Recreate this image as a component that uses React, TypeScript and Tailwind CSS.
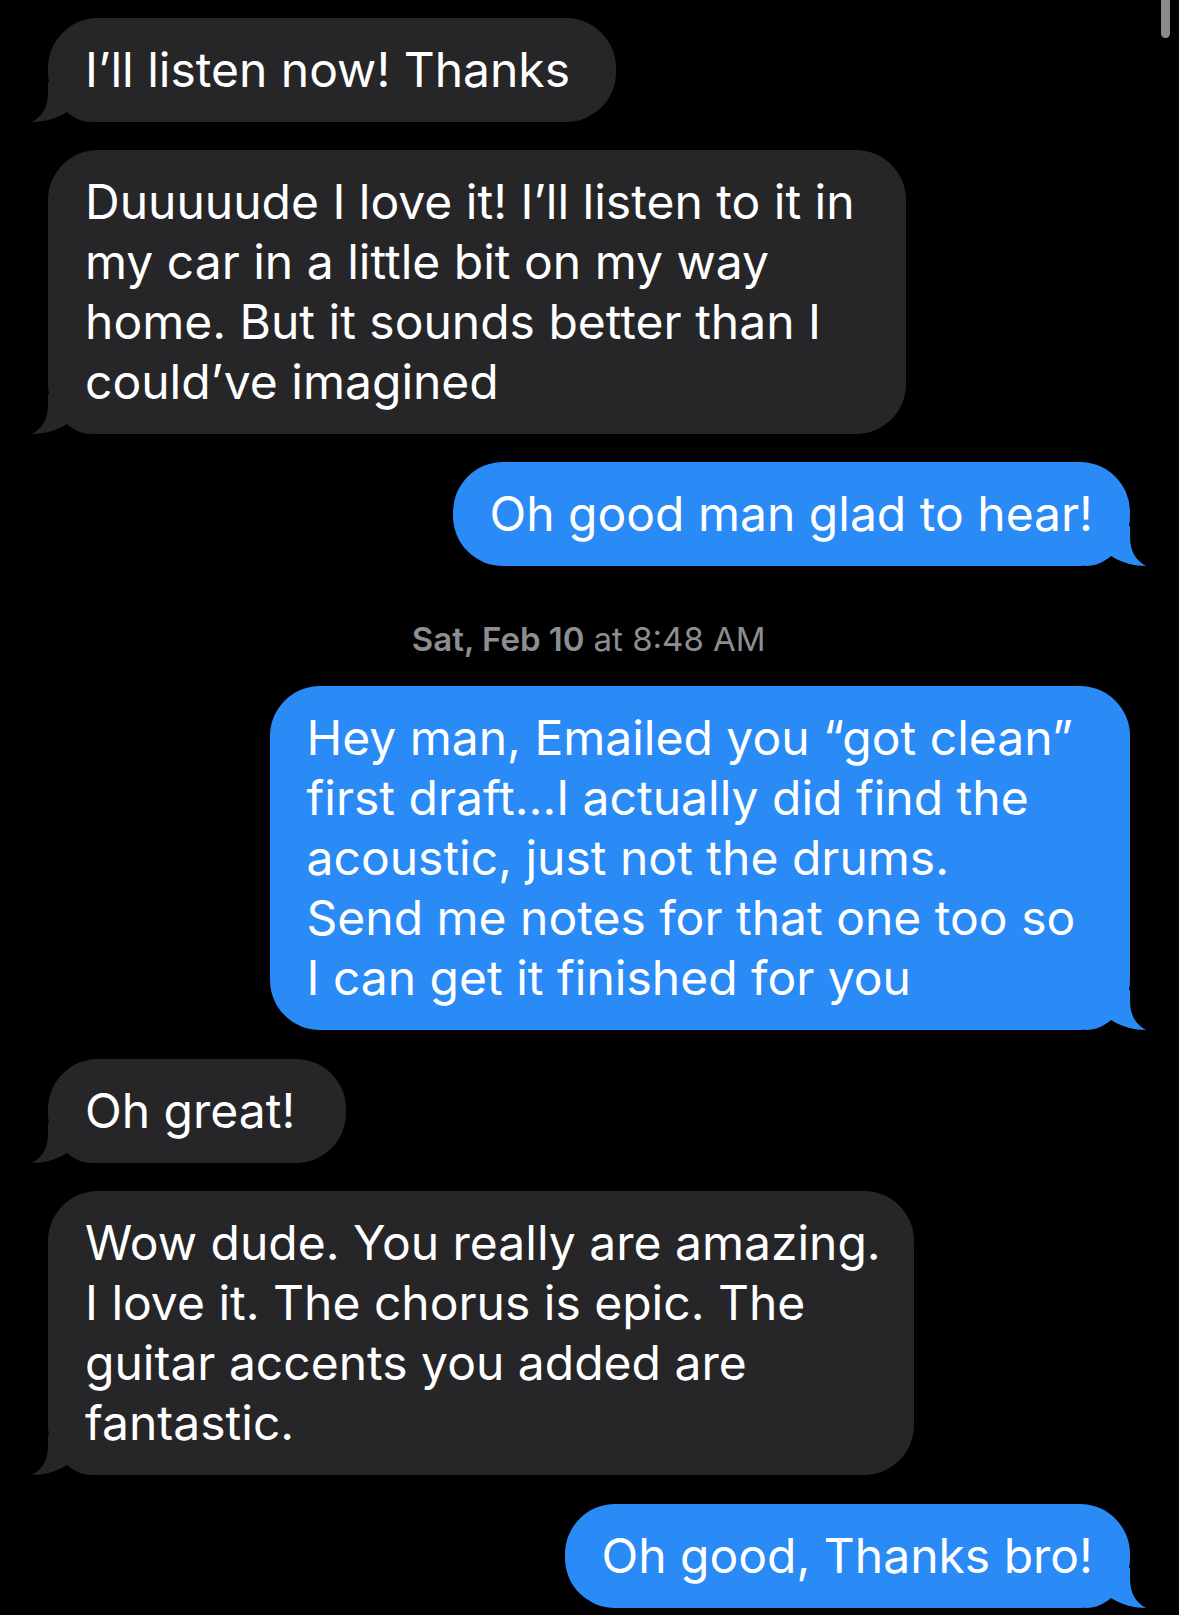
import React from 'react';

type Side = 'in' | 'out';

interface Msg {
  side: Side;
  lines: string[];
  width: number;
  mt: string;
}

const GRAY = '#262628';
const BLUE = '#2a8bf6';

function Tail({ side }: { side: Side }) {
  const fill = side === 'in' ? GRAY : BLUE;
  return (
    <svg
      width="60"
      height="40"
      viewBox="0 0 60 40"
      className={side === 'in' ? 'absolute bottom-0 left-[-16px]' : 'absolute bottom-0 right-[-16px] -scale-x-100'}
    >
      <path d="M16 0 L16 10 C16 27 9 35 0 40 C11 40 24 37 35 30 C42 36 50 40 60 40 L60 0 Z" fill={fill} />
    </svg>
  );
}

function Bubble({ msg }: { msg: Msg }) {
  const isIn = msg.side === 'in';
  return (
    <div className={`flex ${isIn ? 'justify-start' : 'justify-end'} ${msg.mt}`}>
      <div
        className={`relative rounded-[50px] py-[22px] pl-[37px] ${isIn ? 'bg-[#262628]' : 'bg-[#2a8bf6]'}`}
        style={{ width: msg.width }}
      >
        <Tail side={msg.side} />
        <div className="relative text-[48px] leading-[60px] text-white whitespace-nowrap">
          {msg.lines.map((l, i) => (
            <div key={i}>{l}</div>
          ))}
        </div>
      </div>
    </div>
  );
}

const before: Msg[] = [
  { side: 'in', lines: ['I’ll listen now! Thanks'], width: 568, mt: 'mt-0' },
  {
    side: 'in',
    lines: [
      'Duuuuude I love it! I’ll listen to it in',
      'my car in a little bit on my way',
      'home. But it sounds better than I',
      'could’ve imagined',
    ],
    width: 858,
    mt: 'mt-[28.5px]',
  },
  { side: 'out', lines: ['Oh good man glad to hear!'], width: 677, mt: 'mt-[28px]' },
];

const after: Msg[] = [
  {
    side: 'out',
    lines: [
      'Hey man, Emailed you “got clean”',
      'first draft…I actually did find the',
      'acoustic, just not the drums.',
      'Send me notes for that one too so',
      'I can get it finished for you',
    ],
    width: 860,
    mt: 'mt-[26px]',
  },
  { side: 'in', lines: ['Oh great!'], width: 298, mt: 'mt-[28.5px]' },
  {
    side: 'in',
    lines: [
      'Wow dude. You really are amazing.',
      'I love it. The chorus is epic. The',
      'guitar accents you added are',
      'fantastic.',
    ],
    width: 866,
    mt: 'mt-[28.5px]',
  },
  { side: 'out', lines: ['Oh good, Thanks bro!'], width: 565, mt: 'mt-[29px]' },
];

export default function App() {
  return (
    <div
      className="relative w-[1179px] h-[1615px] overflow-hidden bg-black pt-[17.5px] pl-[48px] pr-[49.5px]"
      style={{ fontFamily: 'Inter, "Noto Sans", sans-serif' }}
    >
      {/* scroll indicator */}
      <div className="absolute top-0 left-[1161px] w-[9px] h-[38px] rounded-b-full bg-[#8a8a8a]" />

      {before.map((m, i) => (
        <Bubble key={i} msg={m} />
      ))}

      <div className="mt-[54px] h-[40px] flex items-center justify-center text-[33px] text-[#8d8d92]">
        <span className="font-semibold">Sat, Feb 10</span>
        <span className="ml-[9px]">at 8:48 AM</span>
      </div>

      {after.map((m, i) => (
        <Bubble key={i} msg={m} />
      ))}
    </div>
  );
}
